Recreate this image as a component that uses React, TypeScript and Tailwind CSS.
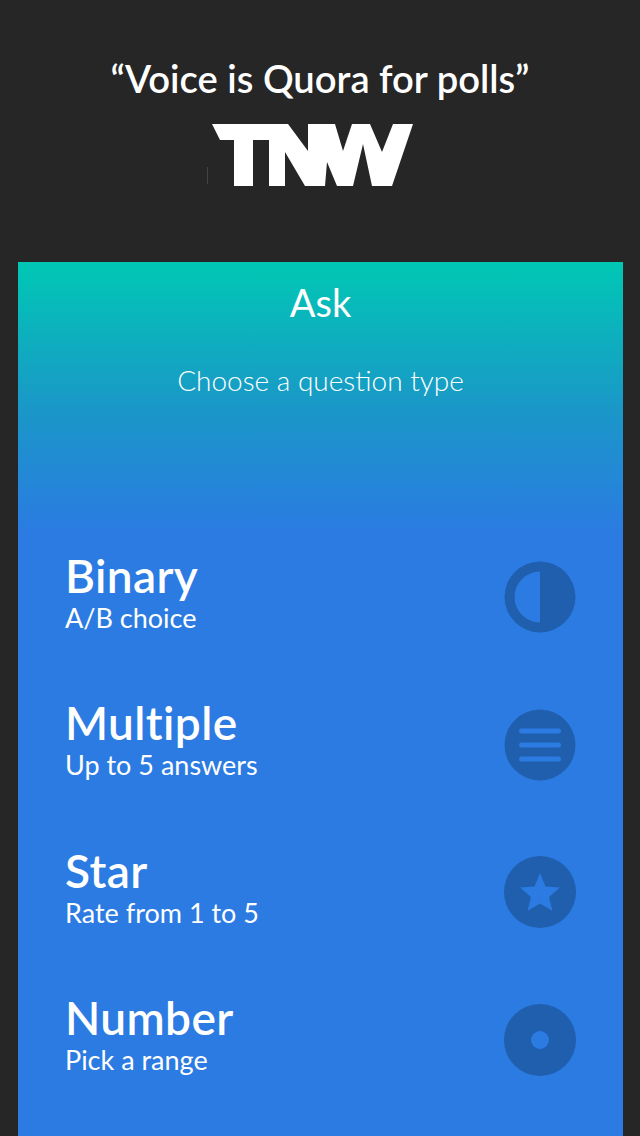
const rows = [
  { title: "Binary", sub: "A/B choice", icon: "binary" },
  { title: "Multiple", sub: "Up to 5 answers", icon: "multiple" },
  { title: "Star", sub: "Rate from 1 to 5", icon: "star" },
  { title: "Number", sub: "Pick a range", icon: "number" },
];

const RowIcon = ({ type }: { type: string }) => {
  return (
    <svg viewBox="0 0 72 72" className="w-[72px] h-[72px]">
      <circle cx="36" cy="36" r={type === "star" || type === "number" ? 36 : 35.5} fill="#1f5fae" />
      {type === "binary" && <path d="M36 10.500 A25.500 25.500 0 0 0 36 61.500 Z" fill="#2b7be2" />}
      {type === "multiple" && (
        <g fill="#2b7be2">
          <rect x="15" y="19.500" width="42" height="5" rx="2.5" />
          <rect x="15" y="33.500" width="42" height="5" rx="2.5" />
          <rect x="15" y="47.500" width="42" height="5" rx="2.5" />
        </g>
      )}
      {type === "star" && (
        <path d="M36 17 L41.5 30.5 L56 31.5 L45 41 L48.5 55 L36 47.5 L23.500 55 L27 41 L16 31.5 L30.500 30.5 Z" fill="#2b7be2" />
      )}
      {type === "number" && <circle cx="36" cy="36" r="9" fill="#2b7be2" />}
    </svg>
  );
};

export default function App() {
  return (
    <div className="w-[640px] h-[1136px] bg-[#262626] overflow-hidden font-['Lato',sans-serif] text-white">
      <div className="h-[262px] pt-[55px] flex flex-col items-center">
        <h1 className="text-[38.200px] leading-[46px] font-semibold">“Voice is Quora for polls”</h1>
        {/* TNW logo */}
        <svg viewBox="-5 0 207 63" className="w-[207px] h-[63px] mt-[23px] mr-[19px]">
          <path
            d="M0 0 H76 L96 27 V0 H123 L131 27 L140 0 H158 L170 28 L181 0 H201 L180 62 H160 L151 20 L141 62 H125 L115 38 L113 62 H93 L73 28 V62 H57 V16 H41 V62 H22 V16 H8 Z"
            fill="#ffffff"
          />
          <rect x="-5" y="43" width="0.6" height="17" fill="#555555" />
        </svg>
      </div>
      <div className="ml-[18px] w-[605px] h-[874px] bg-[linear-gradient(180deg,#00c8b4_0%,#1a97c8_17%,#2b7be2_31%)]">
        <div className="text-center text-[38px] leading-[44px] pt-[18px]">Ask</div>
        <div className="text-center text-[28px] leading-[34px] mt-[39px] font-light">Choose a question type</div>
        <div className="mt-[164px] pl-[47px] pr-[47px] flex flex-col gap-[75.67px]">
          {rows.map((r) => (
            <div key={r.title} className="flex items-center justify-between h-[72px]">
              <div className="-mt-[7px]">
                <div className="text-[46px] leading-[48px] font-semibold tracking-[0.4px]">{r.title}</div>
                <div className="text-[27px] leading-[36px]">{r.sub}</div>
              </div>
              <RowIcon type={r.icon} />
            </div>
          ))}
        </div>
      </div>
    </div>
  );
}
